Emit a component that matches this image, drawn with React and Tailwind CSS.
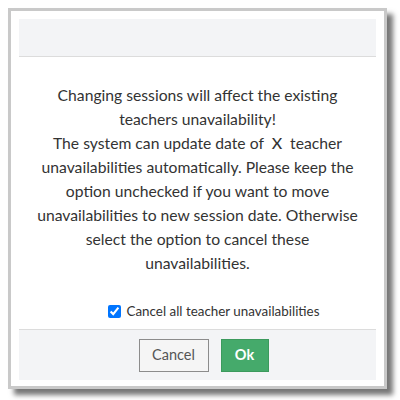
import React, { useState } from "react";

function App() {
    const [cancelAll, setCancelAll] = useState(true);

    return (
        <div className="w-[400px] h-[400px] bg-white pt-2 pl-2" style={{ fontFamily: "Lato, 'Open Sans', sans-serif" }}>
            <div className="w-[379px] h-[381px] border-[3px] border-[#c9c9c9] bg-white p-2 shadow-[6px_6px_5px_#777]">
                <div className="h-[38px] bg-[#f3f4f6] border-b border-[#dcdcdc]"></div>
                <div className="pt-[26px] text-center text-[15.7px] leading-[24px] text-[#333]">
                    Changing sessions will affect the existing<br />
                    teachers unavailability!<br />
                    The system can update date of <span className="mx-1 text-[16px] font-medium">X</span> teacher<br />
                    unavailabilities automatically. Please keep the<br />
                    option unchecked if you want to move<br />
                    unavailabilities to new session date. Otherwise<br />
                    select the option to cancel these<br />
                    unavailabilities.
                </div>
                <label className="mt-[28px] h-4 pl-8 flex items-center justify-center gap-[6px] text-[13.4px] text-[#333]">
                    <input
                        type="checkbox"
                        className="w-[13px] h-[13px] m-0"
                        checked={cancelAll}
                        onChange={() => setCancelAll(!cancelAll)}
                    />
                    Cancel all teacher unavailabilities
                </label>
                <div className="mt-[10px] h-[51px] pl-3 bg-[#f3f4f6] border-t border-[#dcdcdc] flex items-center justify-center gap-3">
                    <button className="w-[70px] h-[33px] border border-[#8c8c8c] bg-[#f5f5f5] text-[14.5px] text-[#555]">
                        Cancel
                    </button>
                    <button className="w-[48px] h-[33px] border border-[#3c9a5d] bg-[#45aa6b] text-[14.5px] font-bold text-white">
                        Ok
                    </button>
                </div>
            </div>
        </div>
    );
}

export default App;
